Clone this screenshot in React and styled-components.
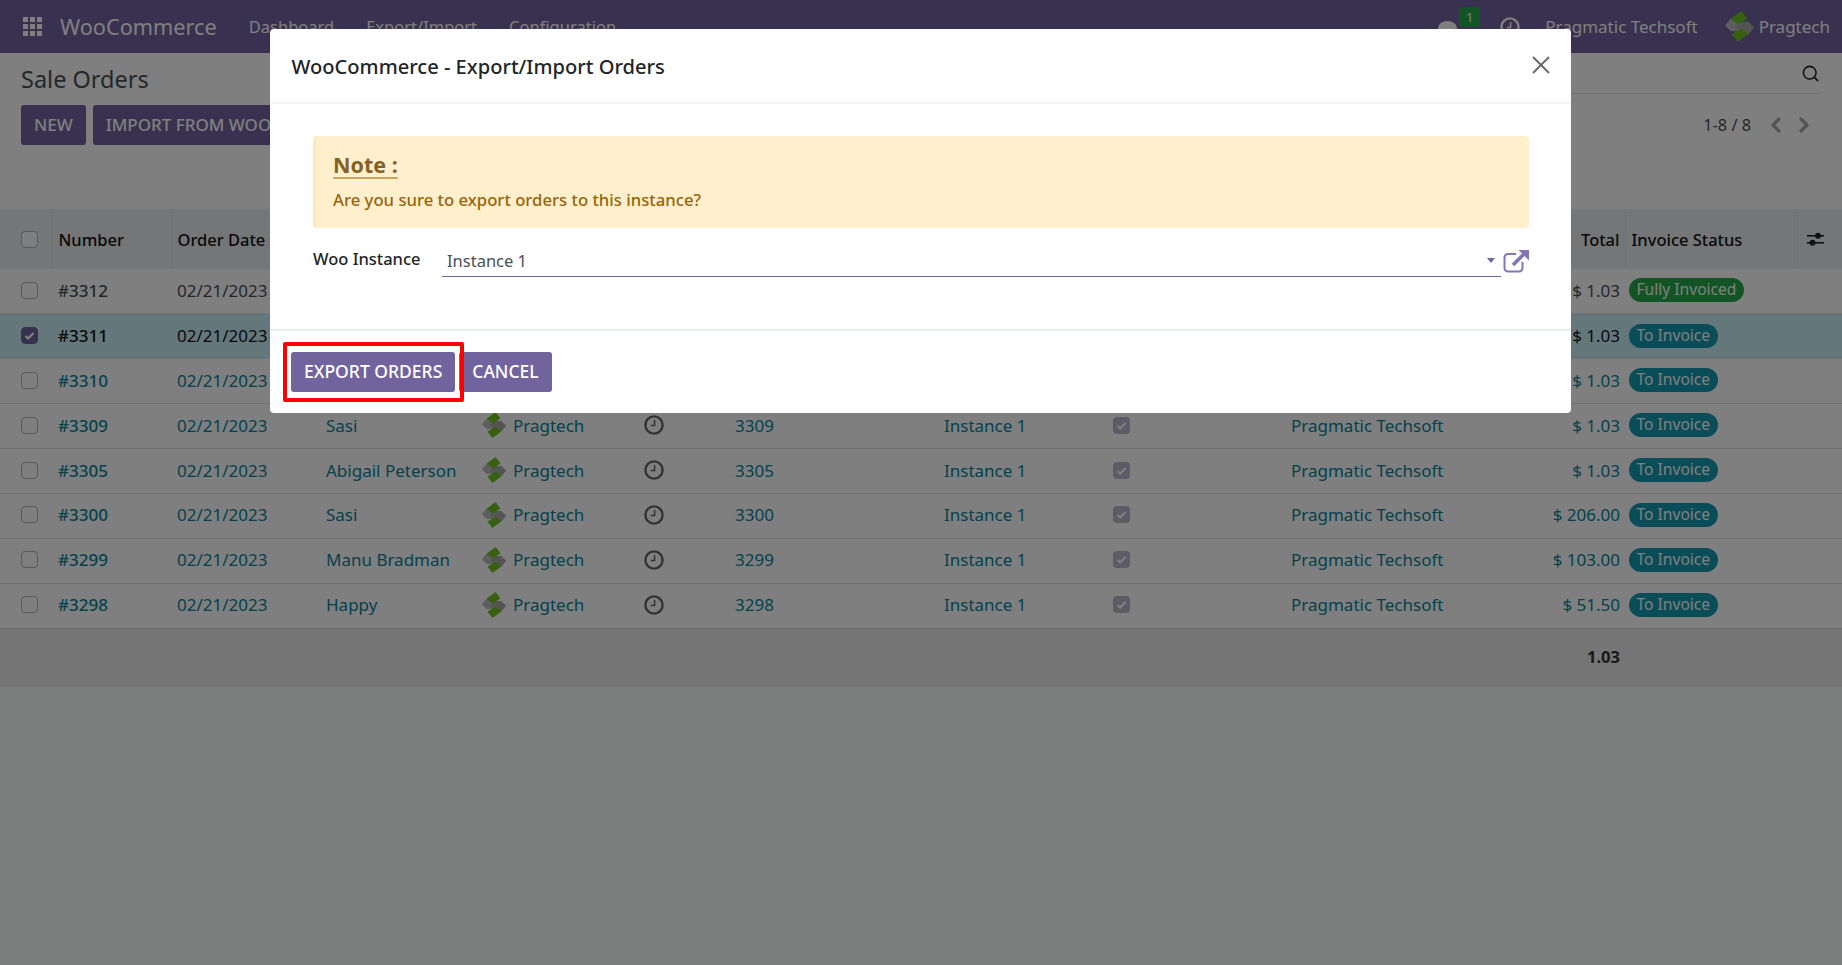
import styled, { createGlobalStyle } from "styled-components";
import { FiSearch, FiChevronLeft, FiChevronRight } from "react-icons/fi";

const orders = [
  { no: "#3312", customer: "Sasi", total: "$ 1.03", status: "Fully Invoiced", tone: "plain" },
  { no: "#3311", customer: "Sasi", total: "$ 1.03", status: "To Invoice", tone: "selected" },
  { no: "#3310", customer: "Sasi", total: "$ 1.03", status: "To Invoice", tone: "link" },
  { no: "#3309", customer: "Sasi", total: "$ 1.03", status: "To Invoice", tone: "link" },
  { no: "#3305", customer: "Abigail Peterson", total: "$ 1.03", status: "To Invoice", tone: "link" },
  { no: "#3300", customer: "Sasi", total: "$ 206.00", status: "To Invoice", tone: "link" },
  { no: "#3299", customer: "Manu Bradman", total: "$ 103.00", status: "To Invoice", tone: "link" },
  { no: "#3298", customer: "Happy", total: "$ 51.50", status: "To Invoice", tone: "link" },
];

const toneColors = { plain: "#495057", selected: "#111", link: "#08849a" };

function Logo({ size }) {
  return (
    <LogoSvg $size={size} viewBox="0 0 30 32">
      <polygon points="0,15 6,8 20,15 14,21 6,21" fill="#bdbdbd" />
      <polygon points="30,17 24,24 10,17 16,11 24,11" fill="#a8a8a8" />
      <polygon points="17,0 23,8 13,14 6,8" fill="#6cc41e" />
      <polygon points="13,32 7,24 17,18 24,24" fill="#6cc41e" />
    </LogoSvg>
  );
}

function ClockIcon({ size, color }) {
  return (
    <svg width={size} height={size} viewBox="0 0 20 20" fill="none" stroke={color} strokeWidth="2.4">
      <circle cx="10" cy="10" r="8.6" />
      <path d="M10.6 5v5.6H6.8" strokeWidth="1.5" />
    </svg>
  );
}

function Tick() {
  return (
    <svg width="13" height="13" viewBox="0 0 16 16" fill="none" stroke="#fff" strokeWidth="2.6">
      <path d="M3 8.5l3.4 3.2L13 4.8" />
    </svg>
  );
}

function App() {
  return (
    <Page>
      <GlobalStyle />
      <Navbar>
        <GridIcon viewBox="0 0 19 19">
          {[0, 7, 14].flatMap((y) =>
            [0, 7, 14].map((x) => <rect key={`${x}-${y}`} x={x} y={y} width="5" height="5" fill="#fff" />)
          )}
        </GridIcon>
        <Brand>WooCommerce</Brand>
        <NavMenu>
          <NavItem>Dashboard</NavItem>
          <NavItem>Export/Import</NavItem>
          <NavItem>Configuration</NavItem>
        </NavMenu>
        <NavRight>
          <ChatIcon>
            <svg width="19" height="16" viewBox="0 0 19 16" fill="#fff">
              <ellipse cx="9.5" cy="7" rx="9.5" ry="7" />
              <path d="M4 11l-2 5 6-3z" />
            </svg>
            <CountBadge>1</CountBadge>
          </ChatIcon>
          <ClockIcon size={20} color="#fff" />
          <CompanyName>Pragmatic Techsoft</CompanyName>
          <UserBox>
            <Logo size={31} />
            <span>Pragtech</span>
          </UserBox>
        </NavRight>
      </Navbar>

      <ControlPanel>
        <TitleRow>
          <PageTitle>Sale Orders</PageTitle>
          <SearchBar>
            <FiSearch size={19} color="#222" />
          </SearchBar>
        </TitleRow>
        <ActionRow>
          <Actions>
            <PageButton>NEW</PageButton>
            <PageButton>IMPORT FROM WOOCOMMERCE</PageButton>
          </Actions>
          <Pager>
            <span>1-8 / 8</span>
            <FiChevronLeft size={24} strokeWidth={3.2} color="#a9a9a9" />
            <FiChevronRight size={24} strokeWidth={3.2} color="#a9a9a9" />
          </Pager>
        </ActionRow>
      </ControlPanel>

      <OrderTable>
        <colgroup>
          {[52, 119, 149, 155, 163, 91, 209, 169, 178, 215, 125, 172, 45].map((w, i) => (
            <col key={i} width={w} />
          ))}
        </colgroup>
        <thead>
          <tr>
            <Th><CheckBox /></Th>
            <Th>Number</Th>
            <Th>Order Date</Th>
            <Th>Customer</Th>
            <Th>Salesperson</Th>
            <Th>Activities</Th>
            <Th>Woo Order</Th>
            <Th>Instance</Th>
            <Th>Exported</Th>
            <Th>Company</Th>
            <Th $right>Total</Th>
            <Th>Invoice Status</Th>
            <Th>
              <OptionsIcon width="17" height="15" viewBox="0 0 17 15" fill="#222">
                <rect y="3" width="17" height="1.6" />
                <rect y="10" width="17" height="1.6" />
                <circle cx="11" cy="3.8" r="3" />
                <circle cx="5.500" cy="10.8" r="3" />
              </OptionsIcon>
            </Th>
          </tr>
        </thead>
        <tbody>
          {orders.map((o) => (
            <Row key={o.no} $tone={o.tone}>
              <Td><CheckBox $checked={o.tone === "selected"}>{o.tone === "selected" && <Tick />}</CheckBox></Td>
              <Td $strong>{o.no}</Td>
              <Td>02/21/2023</Td>
              <Td>{o.customer}</Td>
              <Td>
                <SalesPerson>
                  <Logo size={26} />
                  Pragtech
                </SalesPerson>
              </Td>
              <Td><IconCell><ClockIcon size={20} color="#666" /></IconCell></Td>
              <Td>{o.no.slice(1)}</Td>
              <Td>Instance 1</Td>
              <Td><ReadOnlyBox><Tick /></ReadOnlyBox></Td>
              <Td>Pragmatic Techsoft</Td>
              <Td $right>{o.total}</Td>
              <Td><Badge $paid={o.status === "Fully Invoiced"}>{o.status}</Badge></Td>
              <Td />
            </Row>
          ))}
        </tbody>
        <tfoot>
          <tr>
            <FootCell colSpan={10} />
            <FootCell $right>1.03</FootCell>
            <FootCell colSpan={2} />
          </tr>
        </tfoot>
      </OrderTable>

      <Backdrop>
        <Modal>
          <ModalHeader>
            <ModalTitle>WooCommerce - Export/Import Orders</ModalTitle>
            <CloseIcon width="18" height="18" viewBox="0 0 18 18">
              <path d="M1 1l16 16M17 1L1 17" stroke="#666" strokeWidth="1.8" fill="none" />
            </CloseIcon>
          </ModalHeader>
          <ModalBody>
            <NoteBox>
              <NoteTitle>Note :</NoteTitle>
              <NoteText>Are you sure to export orders to this instance?</NoteText>
            </NoteBox>
            <FieldRow>
              <FieldLabel>Woo Instance</FieldLabel>
              <FieldInput>
                <span>Instance 1</span>
                <Caret />
              </FieldInput>
              <ExternalIcon viewBox="0 0 26 23" fill="none" stroke="#8276b3" strokeWidth="2">
                <path d="M13 4H5a3.500 3.500 0 0 0-3.500 3.500v10.500A3.500 3.500 0 0 0 5 21.500h11a3.500 3.500 0 0 0 3.500-3.500v-6" />
                <path d="M10 15L21 4" strokeWidth="3.600" />
                <path d="M15.500 0H26v10.500z" fill="#8276b3" stroke="none" />
              </ExternalIcon>
            </FieldRow>
          </ModalBody>
          <ModalFooter>
            <ModalButton>EXPORT ORDERS</ModalButton>
            <ModalButton>CANCEL</ModalButton>
            <RedMark />
          </ModalFooter>
        </Modal>
      </Backdrop>
    </Page>
  );
}

export default App;

const font = `"Noto Sans", "Open Sans", sans-serif`;

const GlobalStyle = createGlobalStyle`
  html, body {
    margin: 0;
    height: 100%;
    overflow: hidden;
  }
  body {
    font-family: ${font};
    font-size: 16.5px;
    color: #495057;
  }
`;

const Page = styled.div`
  position: relative;
  width: 1842px;
  height: 965px;
  overflow: hidden;
  background-color: #f6fcfb;
`;

const Navbar = styled.div`
  height: 53px;
  background-color: #71639e;
  display: flex;
  align-items: center;
  padding: 0 12px 0 23px;
  color: #fff;
`;

const GridIcon = styled.svg`
  width: 19px;
  height: 19px;
  margin-right: 18px;
`;

const Brand = styled.div`
  font-size: 21.7px;
  margin-right: 32px;
`;

const NavMenu = styled.div`
  display: flex;
  gap: 32px;
`;

const NavItem = styled.div`
  font-size: 16.5px;
`;

const NavRight = styled.div`
  margin-left: auto;
  display: flex;
  align-items: center;
`;

const ChatIcon = styled.div`
  position: relative;
  width: 19px;
  height: 16px;
  margin-right: 43px;
`;

const CountBadge = styled.span`
  position: absolute;
  left: 21px;
  top: -12px;
  width: 21px;
  height: 20px;
  background-color: #26a848;
  border-radius: 3px;
  font-size: 13px;
  text-align: center;
  line-height: 20px;
`;

const CompanyName = styled.div`
  font-size: 17px;
  margin: 0 26px 0 25px;
`;

const UserBox = styled.div`
  display: flex;
  align-items: center;
  gap: 4px;
  font-size: 17px;
`;

const LogoSvg = styled.svg`
  width: ${(p) => p.$size}px;
  height: ${(p) => p.$size}px;
  flex: none;
`;

const ControlPanel = styled.div`
  height: 156px;
  background-color: #fff;
  padding: 0 22px 0 21px;
  box-sizing: border-box;
`;

const TitleRow = styled.div`
  height: 41px;
  display: flex;
  align-items: center;
  justify-content: space-between;
`;

const PageTitle = styled.div`
  font-size: 23.5px;
  margin-top: 10px;
  color: #495057;
`;

const SearchBar = styled.div`
  width: 900px;
  height: 41px;
  display: flex;
  align-items: center;
  justify-content: flex-end;
  border-bottom: 1px solid #dee2e6;
  box-sizing: border-box;
`;

const ActionRow = styled.div`
  margin-top: 11px;
  display: flex;
  align-items: center;
  justify-content: space-between;
`;

const Actions = styled.div`
  display: flex;
  gap: 7px;
`;

const PageButton = styled.button`
  height: 40px;
  padding: 0 13px 2px;
  border: 0;
  border-radius: 3px;
  background-color: #71639e;
  color: #fff;
  font-family: ${font};
  font-size: 17px;
  font-weight: 500;
`;

const Pager = styled.div`
  display: flex;
  align-items: center;
  gap: 4px;
  color: #495057;
  font-size: 16.3px;
  padding-right: 4px;

  span {
    margin-right: 9px;
  }
`;

const OrderTable = styled.table`
  width: 1842px;
  table-layout: fixed;
  border-collapse: collapse;
`;

const Th = styled.th`
  height: 60px;
  padding: 0 5px 0 6px;
  background-color: #e9ecef;
  border-left: 1px solid #dee2e6;
  color: #111;
  font-size: 16.5px;
  font-weight: 500;
  text-align: ${(p) => (p.$right ? "right" : "left")};
  white-space: nowrap;

  &:first-child {
    border-left: 0;
    padding-left: 21px;
  }
`;

const OptionsIcon = styled.svg`
  display: block;
  margin: 1px 0 0 3px;
`;

const Row = styled.tr`
  height: 44.9px;
  border-bottom: 1px solid #dee2e6;
  background-color: ${(p) => (p.$tone === "selected" ? "#c9f0f8" : "#fff")};
  color: ${(p) => toneColors[p.$tone]};
`;

const Td = styled.td`
  padding: 0 5px 2px 6px;
  font-size: 17px;
  font-weight: ${(p) => (p.$strong ? 500 : 400)};
  text-align: ${(p) => (p.$right ? "right" : "left")};
  white-space: nowrap;

  &:first-child {
    padding-left: 21px;
  }
`;

const CheckBox = styled.div`
  width: 17px;
  height: 17px;
  box-sizing: border-box;
  border: 1px solid ${(p) => (p.$checked ? "#71639e" : "#adb5bd")};
  border-radius: 4px;
  background-color: ${(p) => (p.$checked ? "#71639e" : "#fff")};
  display: flex;
  align-items: center;
  justify-content: center;
`;

const ReadOnlyBox = styled(CheckBox)`
  border: 0;
  background-color: #bab8cc;
`;

const SalesPerson = styled.div`
  display: flex;
  align-items: center;
  gap: 6px;
  margin-left: 0;
`;

const IconCell = styled.div`
  display: flex;
`;

const Badge = styled.span`
  display: inline-block;
  padding: 0 7.5px;
  height: 24px;
  line-height: 22px;
  margin: -2px 0 0 -2px;
  vertical-align: middle;
  border-radius: 12px;
  background-color: ${(p) => (p.$paid ? "#26a848" : "#129ab0")};
  color: #fff;
  font-size: 15.6px;
`;

const FootCell = styled.td`
  height: 56px;
  padding: 0 5px 2px 6px;
  background-color: #ebebeb;
  color: #333;
  font-size: 16.5px;
  font-weight: 700;
  text-align: ${(p) => (p.$right ? "right" : "left")};
`;

const Backdrop = styled.div`
  position: absolute;
  inset: 0;
  background-color: rgba(0, 0, 0, 0.5);
  display: flex;
  justify-content: center;
  align-items: flex-start;
  padding: 29px 1px 0 0;
  box-sizing: border-box;
`;

const Modal = styled.div`
  width: 1301px;
  background-color: #fff;
  border-radius: 4px;
`;

const ModalHeader = styled.div`
  height: 73px;
  padding: 0 21px;
  display: flex;
  align-items: center;
  justify-content: space-between;
  border-bottom: 2px solid #f4f5f6;
`;

const ModalTitle = styled.div`
  font-size: 20.1px;
  font-weight: 500;
  color: #212529;
  margin: 1px 0 0 0.5px;
`;

const CloseIcon = styled.svg`
  margin-top: -2px;
`;

const ModalBody = styled.div`
  height: 225px;
  padding: 32px 42px 0 43px;
  box-sizing: border-box;
`;

const NoteBox = styled.div`
  height: 92px;
  padding: 14px 17px 0;
  box-sizing: border-box;
  background-color: #ffefcc;
  border-left: 3px solid #ffe8b8;
  border-radius: 4px;
`;

const NoteTitle = styled.div`
  font-size: 21.5px;
  font-weight: 700;
  line-height: 30px;
  color: #856024;
  text-decoration: underline;
  text-underline-offset: 4px;
  text-decoration-color: #c9a763;
`;

const NoteText = styled.div`
  margin-top: 8px;
  font-size: 16.7px;
  font-weight: 500;
  color: #96650a;
`;

const FieldRow = styled.div`
  margin-top: 19px;
  display: flex;
  align-items: flex-start;
`;

const FieldLabel = styled.div`
  width: 129px;
  font-size: 16.5px;
  font-weight: 500;
  color: #212529;
`;

const FieldInput = styled.div`
  width: 1059px;
  height: 30px;
  padding: 0 5px 3px;
  box-sizing: border-box;
  border-bottom: 1px solid #71639e;
  display: flex;
  align-items: center;
  justify-content: space-between;
  color: #495057;
  font-size: 16.5px;
`;

const Caret = styled.div`
  width: 0;
  height: 0;
  margin-right: 1px;
  border-left: 4px solid transparent;
  border-right: 4px solid transparent;
  border-top: 5px solid #71639e;
`;

const ExternalIcon = styled.svg`
  width: 26px;
  height: 23px;
  margin: 3px 0 0 2px;
`;

const ModalFooter = styled.div`
  position: relative;
  height: 84px;
  padding: 21px 21px 0;
  box-sizing: border-box;
  border-top: 2px solid #e9edf2;
  display: flex;
  gap: 4px;
  align-items: flex-start;
`;

const ModalButton = styled(PageButton)`
  font-size: 17.5px;
`;

const RedMark = styled.div`
  position: absolute;
  left: 13px;
  top: 11px;
  width: 181px;
  height: 60px;
  box-sizing: border-box;
  border: 4px solid #ff0000;
  border-radius: 2px;
`;
